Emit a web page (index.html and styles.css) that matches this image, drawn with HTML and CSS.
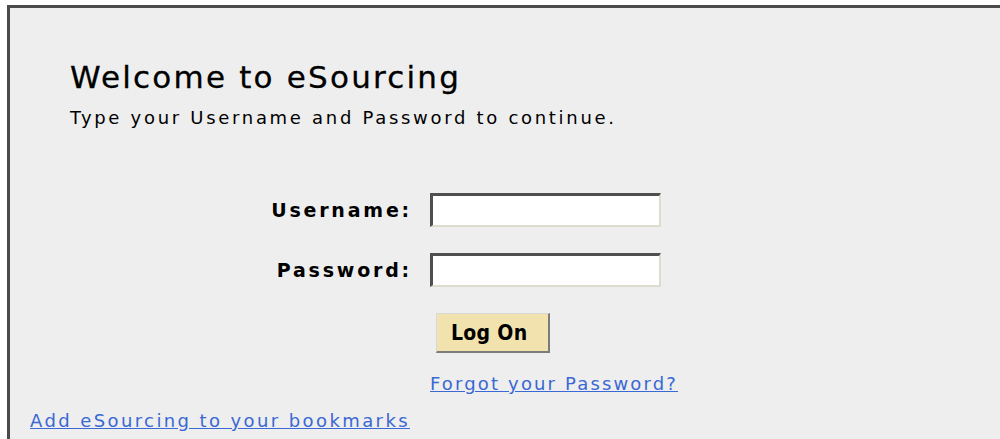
FILE: index.html
```html
<!DOCTYPE html>
<html lang="en">
<head>
<meta charset="utf-8">
<title>eSourcing - Log On</title>
<link rel="stylesheet" href="styles.css">
</head>
<body>
<div class="panel">
  <div class="intro">
    <h1 class="title">Welcome to eSourcing</h1>
    <p class="lead">Type your Username and Password to continue.</p>
  </div>
  <form class="login">
    <label class="field-label" for="user">Username:</label>
    <input class="field-input" id="user" type="text">
    <label class="field-label" for="pass">Password:</label>
    <input class="field-input" id="pass" type="password">
    <div class="actions">
      <button class="logon" type="button">Log On</button>
      <a class="link" href="#">Forgot your Password?</a>
    </div>
  </form>
  <a class="link bookmark" href="#">Add eSourcing to your bookmarks</a>
</div>
</body>
</html>
```
FILE: styles.css
```css
html, body {
  margin: 0;
  padding: 0;
  background: #ffffff;
}

body {
  padding: 5px 0 0 7px;
  font-family: "DejaVu Sans", Verdana, sans-serif;
  color: #000;
}

.panel {
  height: 440px;
  background: #eeeeee;
  border-top: 3px solid #4a4a4a;
  border-left: 3px solid #4a4a4a;
  padding: 0 0 0 20px;
}

.intro {
  padding: 51px 0 0 40px;
}

.title {
  margin: 0;
  font-size: 31px;
  font-weight: normal;
  line-height: 36px;
  letter-spacing: 2.2px;
  -webkit-text-stroke: 0.3px #000;
}

.lead {
  margin: 12px 0 0;
  font-size: 18px;
  line-height: 22px;
  letter-spacing: 2.7px;
}

.login {
  display: grid;
  grid-template-columns: 380px 231px;
  column-gap: 20px;
  row-gap: 26px;
  align-items: center;
  margin-top: 64px;
}

.field-label {
  justify-self: end;
  font-weight: bold;
  font-size: 19px;
  line-height: 22px;
  letter-spacing: 2.8px;
  margin-right: -2px;
}

.field-input {
  box-sizing: border-box;
  width: 231px;
  height: 34px;
  margin: 0;
  background: #fff;
  border-top: 3px solid #4f4f4f;
  border-left: 3px solid #4f4f4f;
  border-right: 2px solid #dedbcf;
  border-bottom: 2px solid #dedbcf;
  outline: none;
}

.actions {
  grid-column: 2;
  display: flex;
  flex-direction: column;
  align-items: flex-start;
}

.logon {
  margin: 0 0 0 6px;
  box-sizing: border-box;
  width: 114px;
  height: 40px;
  padding: 0 0 0 14px;
  text-align: left;
  background: #f2e2ad;
  border-top: 1px solid #d8d8d8;
  border-left: 1px solid #d8d8d8;
  border-right: 2px solid #7c7c7c;
  border-bottom: 2px solid #7c7c7c;
  font-family: "DejaVu Sans Condensed", "DejaVu Sans", sans-serif;
  font-stretch: condensed;
  font-weight: bold;
  font-size: 21px;
  letter-spacing: 0.3px;
  color: #000;
}

.link {
  color: #3a68d4;
  font-size: 18px;
  line-height: 21px;
  letter-spacing: 2.4px;
  text-decoration: underline;
  white-space: nowrap;
}

.actions .link {
  margin-top: 20px;
  letter-spacing: 2.15px;
}

.bookmark {
  display: inline-block;
  margin-top: 16px;
}
```
